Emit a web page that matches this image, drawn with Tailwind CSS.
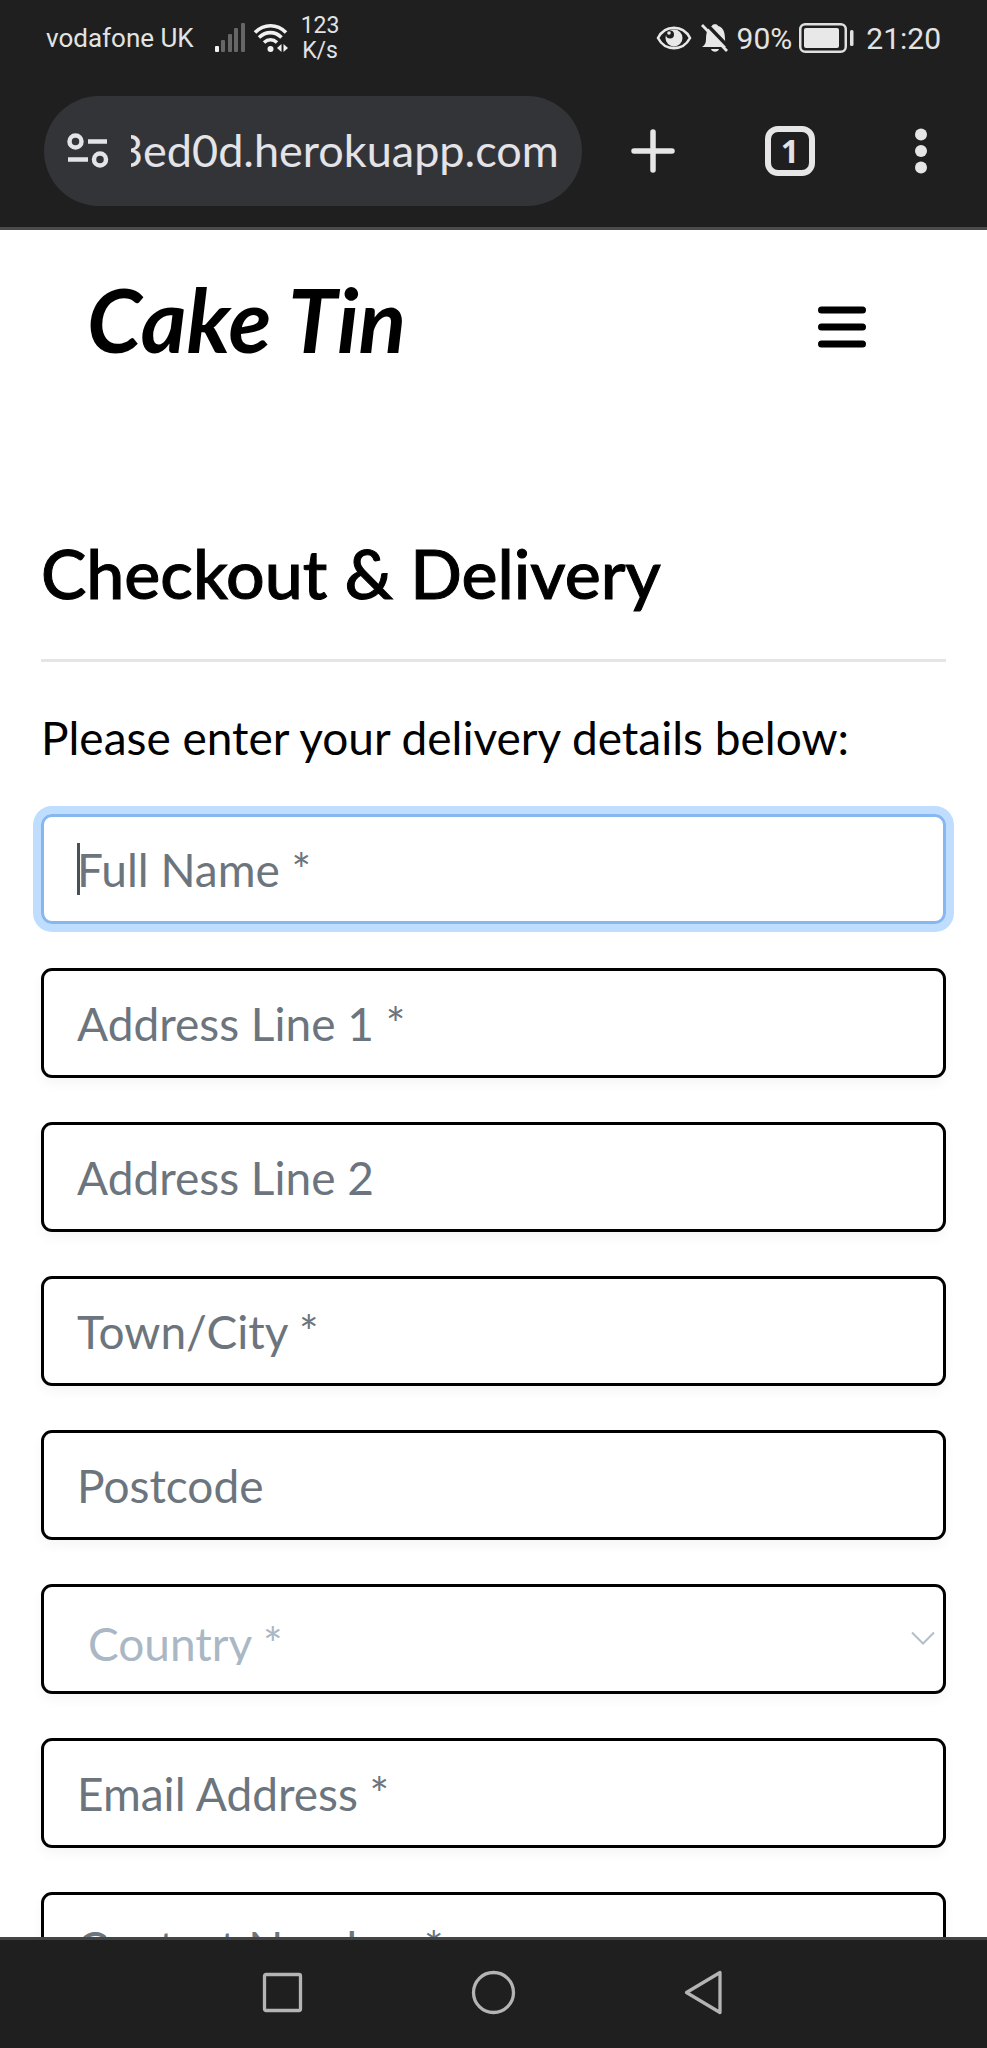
<!DOCTYPE html>
<html lang="en">
<head>
<meta charset="utf-8">
<meta name="viewport" content="width=device-width, initial-scale=1">
<title>Cake Tin - Checkout</title>
<script src="https://cdn.jsdelivr.net/npm/@tailwindcss/browser@4"></script>
</head>
<body class="flex h-screen flex-col overflow-hidden bg-white font-['Lato',sans-serif] text-black">

<!-- Phone status bar and browser toolbar -->
<header class="shrink-0 border-b-3 border-[#4b4b4b] bg-[#1f1f1f] text-[#e3e3e3]">
  <div class="flex h-[76px] items-center justify-between pr-[46px] pl-[46px] font-['Roboto',sans-serif]">
    <div class="flex items-center">
      <span class="text-[26px]">vodafone UK</span>
      <svg class="ml-[20px] h-[30px] w-[32px]" viewBox="0 0 32 30" fill="#666" aria-hidden="true">
        <rect x="1" y="23" width="4" height="6" rx="1" fill="#f1f1f1"/>
        <rect x="7" y="17" width="4" height="12" rx="1"/>
        <rect x="14" y="11" width="4" height="18" rx="1"/>
        <rect x="20" y="5" width="4" height="24" rx="1"/>
        <rect x="27" y="0" width="4" height="29" rx="1"/>
      </svg>
      <svg class="ml-[7px] h-[30px] w-[36px]" viewBox="0 0 36 30" fill="none" stroke="#f1f1f1" stroke-width="3.6" aria-hidden="true">
        <path d="M2 9.500C11 .5 24 .5 33 9.500"/>
        <path d="M6 14.500C13 8 22 8 28.500 14.500"/>
        <path d="M11 19.500C15 16 20 16 24 19.500"/>
        <circle cx="17.500" cy="26" r="3" fill="#f1f1f1" stroke="none"/>
        <path d="M24 25l4.500-4v8zM35 25l-4.500-4v8z" fill="#f1f1f1" stroke="none"/>
      </svg>
      <span class="ml-[12px] text-center text-[23px] leading-[25px]">123<br>K/s</span>
    </div>
    <div class="flex items-center text-[30px]">
      <svg class="h-[26px] w-[36px]" viewBox="0 0 36 26" aria-hidden="true">
        <path d="M2 13C9 -.5 27 -.5 34 13C27 26.500 9 26.500 2 13z" fill="none" stroke="#e8e8e8" stroke-width="2.600"/>
        <circle cx="18" cy="13" r="8.500" fill="#e8e8e8"/>
        <circle cx="14" cy="9.500" r="4" fill="#1f1f1f"/>
        <circle cx="13" cy="8" r="1.800" fill="#e8e8e8"/>
      </svg>
      <svg class="ml-[9px] h-[30px] w-[28px]" viewBox="0 0 28 30" fill="#e8e8e8" aria-hidden="true">
        <path d="M1 24c3-2 4-4 4-8 0-7 2-12 6-13C11 .5 17 .5 17 3c5 1 7 6 7 13 0 4 1 6 3 8z"/>
        <path d="M10 26h8c-1 3.500-7 3.500-8 0z"/>
        <path d="M3 -1.500L30 26.500" stroke="#1f1f1f" stroke-width="3.500" />
        <path d="M1 2L26 28" stroke="#e8e8e8" stroke-width="2.800"/>
      </svg>
      <span class="ml-[8px]">90%</span>
      <svg class="ml-[7px] h-[30px] w-[55px]" viewBox="0 0 55 30" aria-hidden="true">
        <rect x="1.250" y="1.250" width="45.500" height="27.500" rx="5" fill="none" stroke="#e0e0e0" stroke-width="2.500"/>
        <rect x="5" y="5" width="35" height="20" rx="2" fill="#e8e8e8"/>
        <rect x="51" y="7" width="3.500" height="16" rx="1.500" fill="#e0e0e0"/>
      </svg>
      <span class="ml-[12px]">21:20</span>
    </div>
  </div>
  <div class="flex items-center justify-between pt-5 pr-[50px] pb-[21px] pl-[44px]">
    <div class="flex h-[110px] min-w-0 max-w-[538px] flex-1 items-center rounded-full bg-[#333438] pr-[18px] pl-[23px]">
      <button class="shrink-0" aria-label="Site information">
        <svg class="h-[36px] w-[42px]" viewBox="0 0 42 36" fill="none" stroke="#e3e3e8" stroke-width="4.500">
          <circle cx="8.500" cy="8.500" r="6"/><path d="M21 8.500h19M1 26.500h20"/><circle cx="33" cy="26.500" r="6"/>
        </svg>
      </button>
      <input class="ml-[22px] w-full min-w-0 flex-1 indent-[-14px] text-[45px] text-[#e3e3e8] outline-none" type="text" value="3ed0d.herokuapp.com" aria-label="Address bar">
    </div>
    <button class="ml-[49px]" aria-label="New tab">
      <svg class="size-[44px]" viewBox="0 0 44 44" stroke="#e6e6e6" stroke-width="5.500" stroke-linecap="round"><path d="M22 3v38M3 22h38"/></svg>
    </button>
    <button class="ml-[90px] flex size-[50px] items-center justify-center rounded-[13px] border-6 border-[#e6e6e6] font-['Open_Sans',sans-serif] text-[32px] leading-none font-bold" aria-label="Switch tabs">1</button>
    <button class="ml-[90px]" aria-label="More options">
      <svg class="h-[46px] w-[32px]" viewBox="0 0 32 46" fill="#e6e6e6"><circle cx="16" cy="6.500" r="6"/><circle cx="16" cy="23" r="6"/><circle cx="16" cy="39.500" r="6"/></svg>
    </button>
  </div>
</header>

<main class="min-h-0 flex-1 overflow-hidden px-[41px]">
  <nav class="flex h-[194px] items-center justify-between pr-[80px] pl-[46px]" aria-label="Main">
    <a href="#" class="pb-[16px] text-[88px] leading-none font-bold italic">Cake Tin</a>
    <button aria-label="Open menu">
      <svg class="h-[42px] w-[48px]" viewBox="0 0 48 42" stroke="#000" stroke-width="7" stroke-linecap="round"><path d="M3.500 4h41M3.500 21h41M3.500 38h41"/></svg>
    </button>
  </nav>

  <h1 class="mt-[109px] text-[68px] leading-[80px] font-medium [-webkit-text-stroke:1px_#000]">Checkout &amp; Delivery</h1>
  <hr class="mt-[46px] border-t-3 border-[#e5e5e5]">
  <p class="mt-[46px] text-[46px] leading-[60px]">Please enter your delivery details below:</p>

  <form class="mt-[46px] flex flex-col gap-[44px] text-[46px]">
    <div class="relative">
      <input class="h-[110px] w-full rounded-[11px] border-3 border-[#86b7f0] px-[33px] text-black ring-8 ring-[#bfdeff] outline-none placeholder:text-[#6c757d]" type="text" placeholder="Full Name *" aria-label="Full Name">
      <span class="absolute top-[29px] left-[36px] h-[52px] w-[3px] bg-[#495057]"></span>
    </div>
    <input class="h-[110px] w-full rounded-[11px] border-3 border-black px-[33px] shadow-[0_6px_12px_rgba(0,0,40,0.04)] placeholder:text-[#6c757d]" type="text" placeholder="Address Line 1 *" aria-label="Address Line 1">
    <input class="h-[110px] w-full rounded-[11px] border-3 border-black px-[33px] shadow-[0_6px_12px_rgba(0,0,40,0.04)] placeholder:text-[#6c757d]" type="text" placeholder="Address Line 2" aria-label="Address Line 2">
    <input class="h-[110px] w-full rounded-[11px] border-3 border-black px-[33px] shadow-[0_6px_12px_rgba(0,0,40,0.04)] placeholder:text-[#6c757d]" type="text" placeholder="Town/City *" aria-label="Town or City">
    <input class="h-[110px] w-full rounded-[11px] border-3 border-black px-[33px] shadow-[0_6px_12px_rgba(0,0,40,0.04)] placeholder:text-[#6c757d]" type="text" placeholder="Postcode" aria-label="Postcode">
    <div class="relative">
      <select class="block h-[110px] w-full appearance-none rounded-[11px] border-3 border-black bg-white pt-[34px] pr-[60px] pb-[26px] pl-[44px] leading-none text-[#aab7c4] shadow-[0_6px_12px_rgba(0,0,40,0.04)]" aria-label="Country">
        <option>Country *</option>
      </select>
      <svg class="pointer-events-none absolute top-[47px] right-[11px] h-[14px] w-[24px]" viewBox="0 0 24 14" fill="none" stroke="#b4bec8" stroke-width="2" aria-hidden="true"><path d="M1 1.500l11 11 11-11"/></svg>
    </div>
    <input class="h-[110px] w-full rounded-[11px] border-3 border-black px-[33px] shadow-[0_6px_12px_rgba(0,0,40,0.04)] placeholder:text-[#6c757d]" type="email" placeholder="Email Address *" aria-label="Email Address">
    <input class="h-[110px] w-full rounded-[11px] border-3 border-black px-[33px] shadow-[0_6px_12px_rgba(0,0,40,0.04)] placeholder:text-[#6c757d]" type="tel" placeholder="Contact Number *" aria-label="Contact Number">
  </form>
</main>

<!-- Android navigation -->
<footer class="flex h-[111px] shrink-0 items-center justify-center gap-[166px] border-t-3 border-[#444] bg-[#1f1f1f] pb-1">
  <button aria-label="Recent apps"><svg class="size-[45px]" viewBox="0 0 45 45" fill="none" stroke="#b4b4b4" stroke-width="3.300"><rect x="4.500" y="4.500" width="36" height="36" rx="1.500"/></svg></button>
  <button aria-label="Home"><svg class="size-[45px]" viewBox="0 0 45 45" fill="none" stroke="#b4b4b4" stroke-width="3.300"><circle cx="22.500" cy="22.500" r="20"/></svg></button>
  <button aria-label="Back"><svg class="size-[45px]" viewBox="0 0 45 45" fill="none" stroke="#b4b4b4" stroke-width="3.300" stroke-linejoin="round"><path d="M38 2.500v40L4.500 22.500z"/></svg></button>
</footer>
</body>
</html>
